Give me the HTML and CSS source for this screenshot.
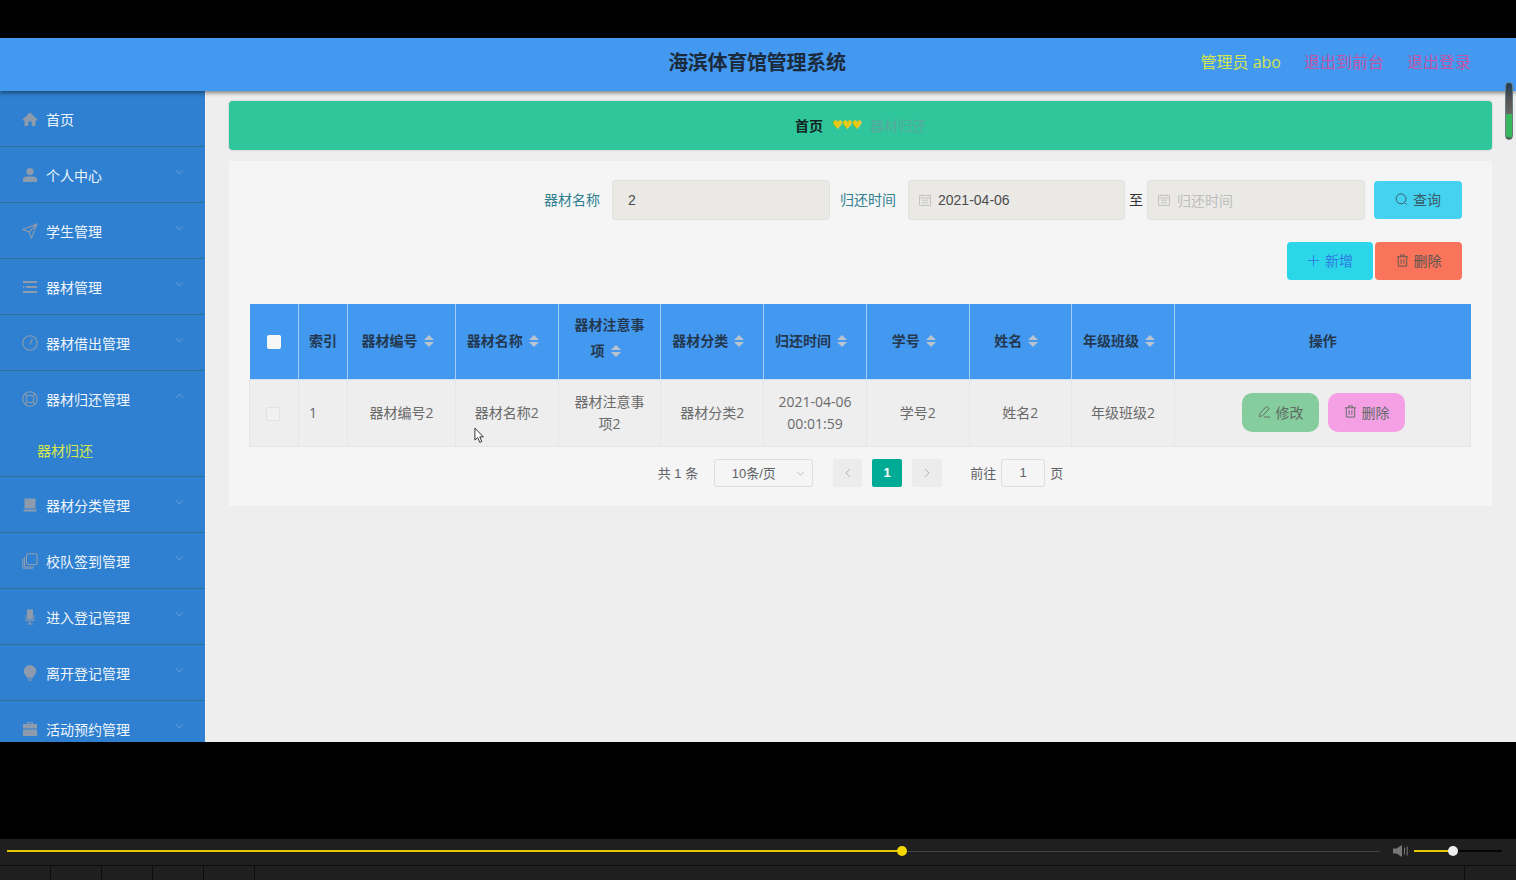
FILE: index.html
```html
<!DOCTYPE html>
<html>
<head>
    <meta charset="utf-8">
    <title>海滨体育馆管理系统</title>
    <link rel="stylesheet" href="styles.css">
</head>
<body>
    <div class="screen">
        <header class="topbar">
            <h1 class="topbar-title">海滨体育馆管理系统</h1>
            <div class="topbar-links">
                <span class="link-user">管理员 abo</span>
                <span class="link-out">退出到前台</span>
                <span class="link-out">退出登录</span>
            </div>
        </header>
        <div class="body-row">
            <nav class="sidebar">
                <div class="menu-item">
                    <svg class="menu-icon" viewBox="0 0 16 16"><path d="M8 1.5 0.8 8.2V9.5H2.5V15H6.3V10.5H9.7V15H13.5V9.5H15.2V8.2Z"/></svg>
                    <span>首页</span>
                </div>
                <div class="menu-item">
                    <svg class="menu-icon" viewBox="0 0 16 16"><circle cx="8" cy="4.6" r="3.6"/><path d="M1 15V12.5C1 10.5 2.6 9.4 4.4 9.4H11.6C13.4 9.4 15 10.5 15 12.5V15Z"/></svg>
                    <span>个人中心</span>
                    <svg class="chevron" viewBox="0 0 10 6"><path d="M1 1 5 5 9 1"/></svg>
                </div>
                <div class="menu-item">
                    <svg class="menu-icon icon-line" viewBox="0 0 16 16"><path d="M15 1 1 6.5 7 9 9.5 15ZM15 1 7 9"/></svg>
                    <span>学生管理</span>
                    <svg class="chevron" viewBox="0 0 10 6"><path d="M1 1 5 5 9 1"/></svg>
                </div>
                <div class="menu-item">
                    <svg class="menu-icon" viewBox="0 0 16 16"><path d="M1 2H15V4H1ZM4 7H15V9H4ZM1 12H15V14H1ZM1 6.5 3 8 1 9.5Z"/></svg>
                    <span>器材管理</span>
                    <svg class="chevron" viewBox="0 0 10 6"><path d="M1 1 5 5 9 1"/></svg>
                </div>
                <div class="menu-item">
                    <svg class="menu-icon icon-line" viewBox="0 0 16 16"><circle cx="8" cy="8" r="7.2"/><path d="M10.4 4 7.8 9.6"/></svg>
                    <span>器材借出管理</span>
                    <svg class="chevron" viewBox="0 0 10 6"><path d="M1 1 5 5 9 1"/></svg>
                </div>
                <div class="menu-group">
                    <div class="menu-item menu-item-open">
                        <svg class="menu-icon icon-line" viewBox="0 0 16 16"><circle cx="8" cy="8" r="7.2"/><circle cx="8" cy="8" r="3.8"/><path d="M3 3 5.3 5.3M13 3 10.7 5.3M3 13 5.3 10.7M13 13 10.7 10.7"/></svg>
                        <span>器材归还管理</span>
                        <svg class="chevron" viewBox="0 0 10 6"><path d="M1 5 5 1 9 5"/></svg>
                    </div>
                    <div class="menu-sub">器材归还</div>
                </div>
                <div class="menu-item">
                    <svg class="menu-icon" viewBox="0 0 16 16"><path d="M2.5 1.5H13.5V11.5H2.5ZM1 12.5H15L14 14.5H2Z"/></svg>
                    <span>器材分类管理</span>
                    <svg class="chevron" viewBox="0 0 10 6"><path d="M1 1 5 5 9 1"/></svg>
                </div>
                <div class="menu-item">
                    <svg class="menu-icon icon-line" viewBox="0 0 16 16"><rect x="4.5" y="0.8" width="10.7" height="10.7" rx="1.5"/><path d="M2.5 4V13C2.5 14 3 14 4 14H12M0.8 5.5V14C0.8 15 1.3 15.3 2 15.3H11"/></svg>
                    <span>校队签到管理</span>
                    <svg class="chevron" viewBox="0 0 10 6"><path d="M1 1 5 5 9 1"/></svg>
                </div>
                <div class="menu-item">
                    <svg class="menu-icon" viewBox="0 0 16 16"><path d="M5 .5H11V10.5H5ZM3.5 6H4.3V11.3H11.7V6H12.5V12H8.6V14.5H11V15.5H5V14.5H7.4V12H3.5Z"/></svg>
                    <span>进入登记管理</span>
                    <svg class="chevron" viewBox="0 0 10 6"><path d="M1 1 5 5 9 1"/></svg>
                </div>
                <div class="menu-item">
                    <svg class="menu-icon" viewBox="0 0 16 16"><path d="M8 .3C4.4.3 1.8 3 1.8 6.2 1.8 9 4.4 10.5 5.2 12.8H10.8C11.6 10.5 14.2 9 14.2 6.2 14.2 3 11.6.3 8 .3ZM5.6 13.5H10.4V14.5H5.6ZM6.5 15H9.5V15.8H6.5Z"/></svg>
                    <span>离开登记管理</span>
                    <svg class="chevron" viewBox="0 0 10 6"><path d="M1 1 5 5 9 1"/></svg>
                </div>
                <div class="menu-item">
                    <svg class="menu-icon" viewBox="0 0 16 16"><path d="M5 3V1.2H11V3H15V7.5H1V3ZM6.2 3H9.8V2.3H6.2ZM1 8.5H15V15H1Z"/></svg>
                    <span>活动预约管理</span>
                    <svg class="chevron" viewBox="0 0 10 6"><path d="M1 1 5 5 9 1"/></svg>
                </div>
            </nav>
            <main class="content">
                <div class="crumbs">
                    <b>首页</b>
                    <span class="hearts">♥♥♥</span>
                    <span class="crumb-current">器材归还</span>
                </div>
                <section class="panel">
                    <div class="search-row">
                        <label class="field-label">器材名称</label>
                        <div class="input input-name">2</div>
                        <label class="field-label label-gap">归还时间</label>
                        <div class="input input-date">
                            <svg class="cal" viewBox="0 0 12 12"><path d="M.5 1.5H11.5V11.5H.5ZM.5 4H11.5M3 .2V2M9 .2V2M3 6.2H9M3 8.8H9"/></svg>
                            2021-04-06
                        </div>
                        <span class="range-to">至</span>
                        <div class="input input-date is-empty">
                            <svg class="cal" viewBox="0 0 12 12"><path d="M.5 1.5H11.5V11.5H.5ZM.5 4H11.5M3 .2V2M9 .2V2M3 6.2H9M3 8.8H9"/></svg>
                            归还时间
                        </div>
                        <button class="btn btn-search">
                            <svg class="btn-icon" viewBox="0 0 14 14"><circle cx="6.5" cy="6.3" r="5.3"/><path d="M10.4 10.2 12.6 12.6"/></svg>
                            查询
                        </button>
                    </div>
                    <div class="action-row">
                        <button class="btn btn-add">
                            <svg class="btn-icon" viewBox="0 0 14 14"><path d="M7 1V13M1 7H13"/></svg>
                            新增
                        </button>
                        <button class="btn btn-remove">
                            <svg class="btn-icon" viewBox="0 0 14 14"><path d="M1 3H13M5 3V1H9V3M2.5 3V13H11.5V3M5.5 5.5V10.5M8.5 5.5V10.5"/></svg>
                            删除
                        </button>
                    </div>
                    <table class="grid">
                        <colgroup>
                            <col class="col-check">
                            <col class="col-index">
                            <col class="col-wide">
                            <col><col><col><col><col><col><col>
                            <col class="col-ops">
                        </colgroup>
                        <thead>
                            <tr>
                                <th><span class="head-check"></span></th>
                                <th>索引</th>
                                <th>器材编号<i class="sort"></i></th>
                                <th>器材名称<i class="sort"></i></th>
                                <th class="th-wrap">器材注意事项<i class="sort"></i></th>
                                <th>器材分类<i class="sort"></i></th>
                                <th>归还时间<i class="sort"></i></th>
                                <th>学号<i class="sort"></i></th>
                                <th>姓名<i class="sort"></i></th>
                                <th>年级班级<i class="sort"></i></th>
                                <th>操作</th>
                            </tr>
                        </thead>
                        <tbody>
                            <tr>
                                <td><span class="row-check"></span></td>
                                <td class="cell-index">1</td>
                                <td>器材编号2</td>
                                <td>器材名称2</td>
                                <td>器材注意事项2</td>
                                <td>器材分类2</td>
                                <td>2021-04-06 00:01:59</td>
                                <td>学号2</td>
                                <td>姓名2</td>
                                <td>年级班级2</td>
                                <td>
                                    <div class="row-actions">
                                        <button class="btn btn-edit">
                                            <svg class="btn-icon" viewBox="0 0 14 14"><path d="M9 1.5 12 4 5 11.5 1.5 12.5 2.3 9ZM6.5 13H13"/></svg>
                                            修改
                                        </button>
                                        <button class="btn btn-del">
                                            <svg class="btn-icon" viewBox="0 0 14 14"><path d="M1 3H13M5 3V1H9V3M2.5 3V13H11.5V3M5.5 5.5V10.5M8.5 5.5V10.5"/></svg>
                                            删除
                                        </button>
                                    </div>
                                </td>
                            </tr>
                        </tbody>
                    </table>
                    <div class="pager">
                        <span>共 1 条</span>
                        <div class="page-size">10条/页
                            <svg class="page-arrow" viewBox="0 0 10 6"><path d="M1 1 5 5 9 1"/></svg>
                        </div>
                        <span class="page-btn page-prev"><svg class="page-arrow" viewBox="0 0 6 10"><path d="M5 1 1 5 5 9"/></svg></span>
                        <span class="page-btn is-current">1</span>
                        <span class="page-btn"><svg class="page-arrow" viewBox="0 0 6 10"><path d="M1 1 5 5 1 9"/></svg></span>
                        <div class="page-jump">
                            <span>前往</span>
                            <span class="page-input">1</span>
                            <span>页</span>
                        </div>
                    </div>
                </section>
            </main>
        </div>
        <div class="scroll-thumb"></div>
        <svg class="cursor" viewBox="0 0 12 18"><path d="M1 1V14L4 11.2 6.3 16.5 8.5 15.5 6.3 10.5H10.2Z"/></svg>
    </div>
    <div class="player">
        <div class="player-track">
            <div class="progress-done"><i class="progress-knob"></i></div>
            <div class="progress-rest"></div>
            <svg class="speaker" viewBox="0 0 15 14"><path d="M0 4.5H3.5L9 1V13L3.5 9.5H0ZM11 3.5H12V10.5H11ZM13.7 2.5H14.7V11.5H13.7Z"/></svg>
            <div class="volume">
                <div class="volume-done"><i class="volume-knob"></i></div>
            </div>
        </div>
        <div class="player-tabs">
            <span></span><span></span><span></span><span></span><span></span>
            <span class="tab-fill"></span>
            <span class="tab-end"></span>
        </div>
    </div>
</body>
</html>
```

FILE: styles.css
```css
* {
    box-sizing: border-box;
}

html, body {
    margin: 0;
    height: 100%;
    overflow: hidden;
}

body {
    background: #000;
    font-family: "Liberation Sans", "Noto Sans CJK SC", sans-serif;
    font-size: 14px;
    color: #606266;
    padding-top: 38px;
}

.screen {
    position: relative;
    height: 704px;
    overflow: hidden;
    display: flex;
    flex-direction: column;
    background: #eeeeee;
}

/* top bar */
.topbar {
    position: relative;
    z-index: 2;
    height: 53px;
    flex: none;
    display: flex;
    align-items: center;
    justify-content: center;
    background: #4398ef;
    box-shadow: 0 2px 4px rgba(0, 0, 0, .45);
}

.topbar-title {
    margin: 0 2px 4px 0;
    font-size: 20px;
    line-height: 48px;
    letter-spacing: -.25px;
    font-weight: bold;
    color: #1b2b3c;
}

.topbar-links {
    position: absolute;
    right: 45px;
    top: 0;
    height: 45px;
    display: flex;
    align-items: center;
    gap: 23px;
    font-size: 16px;
}

.link-user {
    color: #d3e54e;
    font-family: "Open Sans", "Noto Sans CJK SC", sans-serif;
    margin-left: -1px;
}

.link-out {
    color: #bf56a6;
}

.body-row {
    flex: 1;
    display: flex;
    min-height: 0;
}

/* side menu */
.sidebar {
    width: 206px;
    flex: none;
    overflow: hidden;
    background: #2f80d0;
    border-right: 1px solid #f2f6fb;
}

.menu-item {
    height: 56px;
    display: flex;
    align-items: center;
    padding-left: 22px;
    color: #f0f6fc;
    border-bottom: 1px solid #2e7295;
    position: relative;
}

.menu-icon {
    width: 16px;
    height: 16px;
    margin-right: 8px;
    fill: #8e9bad;
    flex: none;
}

.menu-icon.icon-line {
    fill: none;
    stroke: #8e9bad;
    stroke-width: 1.1;
}

.chevron {
    position: absolute;
    right: 21px;
    top: 22px;
    width: 9px;
    height: 6px;
    fill: none;
    stroke: #6ea6dc;
    stroke-width: 1;
}

.menu-group {
    border-bottom: 1px solid #2e7295;
}

.menu-item-open {
    border-bottom: 0;
}

.menu-sub {
    height: 49px;
    line-height: 48px;
    padding-left: 37px;
    color: #d6e84c;
}

/* main area */
.content {
    flex: 1;
    min-width: 0;
    padding: 10px 24px 0 23px;
}

.crumbs {
    height: 49px;
    padding: 0 0 2px;
    display: flex;
    align-items: center;
    justify-content: center;
    gap: 10px;
    background: #2fc69c;
    border-radius: 4px;
    box-shadow: 0 0 2px rgba(0, 0, 0, .25);
    color: #12241f;
}

.hearts {
    width: 30px;
    margin: 0 -2px 0 -1px;
    color: #e9c916;
    font-size: 12px;
    letter-spacing: -1px;
    font-family: "DejaVu Sans", sans-serif;
    white-space: nowrap;
}

.crumb-current {
    color: #58a99c;
}

.panel {
    margin-top: 11px;
    height: 345px;
    padding: 19px 21px 0;
    background: #f5f5f5;
}

.search-row {
    display: flex;
    align-items: center;
    justify-content: flex-end;
    height: 40px;
    padding-right: 9px;
}

.field-label {
    color: #2f7f90;
    margin-right: 12px;
    padding-bottom: 2px;
}

.label-gap {
    margin-left: 10px;
}

.input {
    height: 40px;
    display: flex;
    align-items: center;
    background: #ebe9e6;
    border: 1px solid #e1e0de;
    border-radius: 4px;
    color: #4b4b4b;
}

.input-name {
    width: 218px;
    padding-left: 15px;
}

.input-date {
    width: 217px;
    padding-left: 10px;
}

.input-date.is-empty {
    width: 218px;
    color: #bdbdbd;
}

.cal {
    width: 12px;
    height: 12px;
    margin-right: 7px;
    fill: none;
    stroke: #c4c4c4;
    stroke-width: 1;
}

.range-to {
    width: 22px;
    text-align: center;
    color: #303133;
    padding-bottom: 2px;
}

.btn {
    display: inline-flex;
    align-items: center;
    justify-content: center;
    gap: 5px;
    border: 0;
    padding: 0 0 2px;
    border-radius: 4px;
    font-family: inherit;
    font-size: 14px;
}

.btn-icon {
    width: 13px;
    height: 13px;
    fill: none;
    stroke: currentColor;
    stroke-width: 1;
    flex: none;
}

.btn-search {
    width: 88px;
    height: 38px;
    margin-left: 9px;
    background: #44d2f0;
    color: #3a5a66;
}

.action-row {
    display: flex;
    justify-content: flex-end;
    gap: 2px;
    margin-top: 22px;
    padding-right: 9px;
}

.btn-add {
    width: 86px;
    height: 38px;
    background: #2bd6e8;
    color: #2f7be0;
}

.btn-remove {
    width: 87px;
    height: 38px;
    background: #f9745b;
    color: #5c5552;
}

/* table */
.grid {
    width: 1222px;
    margin: 24px 0 0 -1px;
    table-layout: fixed;
    border-collapse: collapse;
}

.col-check {
    width: 49px;
}

.col-index {
    width: 49px;
}

.col-wide {
    width: 108px;
}

.col-ops {
    width: 296px;
}

.grid th {
    height: 75px;
    padding: 0 10px 1px;
    background: #4398ef;
    border: 1px solid #a6cdf3;
    border-top: 0;
    border-bottom: 1px solid #cfe2f6;
    font-size: 14px;
    line-height: 26px;
    color: #23384f;
    text-align: center;
}

.grid th.th-wrap {
    padding-bottom: 7px;
}

.grid th:first-child, .grid th:last-child {
    border-left: 0;
    border-right: 0;
}

.grid td {
    height: 67px;
    padding: 0 10px;
    background: #eeeeee;
    border: 1px solid #e3e5e9;
    font-family: "Open Sans", "Noto Sans CJK SC", sans-serif;
    line-height: 22px;
    color: #6a6a6a;
    text-align: center;
}

.grid .cell-index {
    text-align: left;
}

.head-check {
    display: inline-block;
    width: 14px;
    height: 14px;
    vertical-align: middle;
    background: #f7f7f7;
    border-radius: 2px;
}

.row-check {
    display: inline-block;
    width: 14px;
    height: 14px;
    margin-left: -3px;
    vertical-align: middle;
    background: #f1f1f1;
    border: 1px solid #e2e2e2;
    border-radius: 2px;
}

.sort {
    display: inline-block;
    position: relative;
    width: 10px;
    height: 12px;
    margin: 0 8px 0 6px;
    vertical-align: -1px;
}

.sort::before, .sort::after {
    content: "";
    position: absolute;
    left: 0;
    border-left: 5px solid transparent;
    border-right: 5px solid transparent;
}

.sort::before {
    top: 0;
    border-bottom: 5px solid #b9c4d0;
}

.sort::after {
    bottom: 0;
    border-top: 5px solid #b9c4d0;
}

.row-actions {
    display: flex;
    justify-content: center;
    gap: 9px;
    padding-left: 2px;
}

.btn-edit, .btn-del {
    width: 77px;
    height: 39px;
    border-radius: 10px;
    color: #5f6a64;
}

.btn-edit {
    background: #86cd9e;
}

.btn-del {
    background: #f5a0e5;
}

/* pagination */
.pager {
    display: flex;
    align-items: center;
    justify-content: center;
    margin-top: 12px;
    height: 28px;
    padding: 0 1px 0 1px;
    font-size: 13px;
    color: #606266;
}

.page-size {
    width: 99px;
    height: 28px;
    margin: 0 20px 0 16px;
    padding-right: 20px;
    display: flex;
    align-items: center;
    justify-content: center;
    position: relative;
    background: #f5f5f5;
    border: 1px solid #dcdfe6;
    border-radius: 3px;
}

.page-size .page-arrow {
    position: absolute;
    right: 7px;
    top: 11px;
    width: 9px;
    height: 5px;
}

.page-arrow {
    width: 6px;
    height: 10px;
    fill: none;
    stroke: #b0b3b8;
    stroke-width: 1;
}

.page-btn {
    width: 30px;
    height: 28px;
    margin-right: 10px;
    display: flex;
    align-items: center;
    justify-content: center;
    background: #ececec;
    border-radius: 2px;
}

.page-prev {
    width: 29px;
}

.page-btn.is-current {
    background: #00ab96;
    color: #fff;
    font-weight: bold;
}

.page-jump {
    display: flex;
    align-items: center;
    gap: 5px;
    margin-left: 18px;
}

.page-input {
    width: 44px;
    height: 28px;
    line-height: 26px;
    text-align: center;
    border: 1px solid #dcdfe6;
    border-radius: 3px;
}

/* things lying over the page */
.scroll-thumb {
    position: absolute;
    z-index: 3;
    right: 3px;
    top: 44px;
    width: 8px;
    height: 58px;
    border-radius: 4px;
    border: 1px solid #6b7a80;
    background: linear-gradient(#1c3c58 0, #555 30%, #666 55%, #37b85f 56%, #37b85f 95%, #444 100%);
}

.cursor {
    position: absolute;
    left: 474px;
    top: 389px;
    width: 11px;
    height: 17px;
    fill: #fff;
    stroke: #222;
    stroke-width: 1;
}

/* player bar */
.player {
    margin-top: 97px;
    height: 41px;
    background: #1f1f1f;
}

.player-track {
    height: 27px;
    display: flex;
    align-items: center;
    padding: 0 0 2px 7px;
    border-bottom: 1px solid #0c0c0c;
}

.progress-done {
    width: 895px;
    height: 2px;
    position: relative;
    background: #e6c800;
}

.progress-knob {
    position: absolute;
    right: -5px;
    top: -4px;
    width: 10px;
    height: 10px;
    border-radius: 50%;
    background: #f4d800;
}

.progress-rest {
    width: 478px;
    height: 1px;
    background: #444;
}

.speaker {
    width: 15px;
    height: 14px;
    margin-left: 13px;
    fill: #777;
}

.volume {
    width: 88px;
    height: 2px;
    margin-left: 6px;
    background: #050505;
}

.volume-done {
    width: 39px;
    height: 2px;
    position: relative;
    background: #e6c800;
}

.volume-knob {
    position: absolute;
    right: -5px;
    top: -4px;
    width: 10px;
    height: 10px;
    border-radius: 50%;
    background: #eee;
}

.player-tabs {
    display: flex;
    height: 14px;
}

.player-tabs span {
    width: 51px;
    border-right: 1px solid #0c0c0c;
}

.player-tabs .tab-fill {
    flex: 1;
}

.player-tabs .tab-end {
    width: 51px;
    border: 0;
}
```
